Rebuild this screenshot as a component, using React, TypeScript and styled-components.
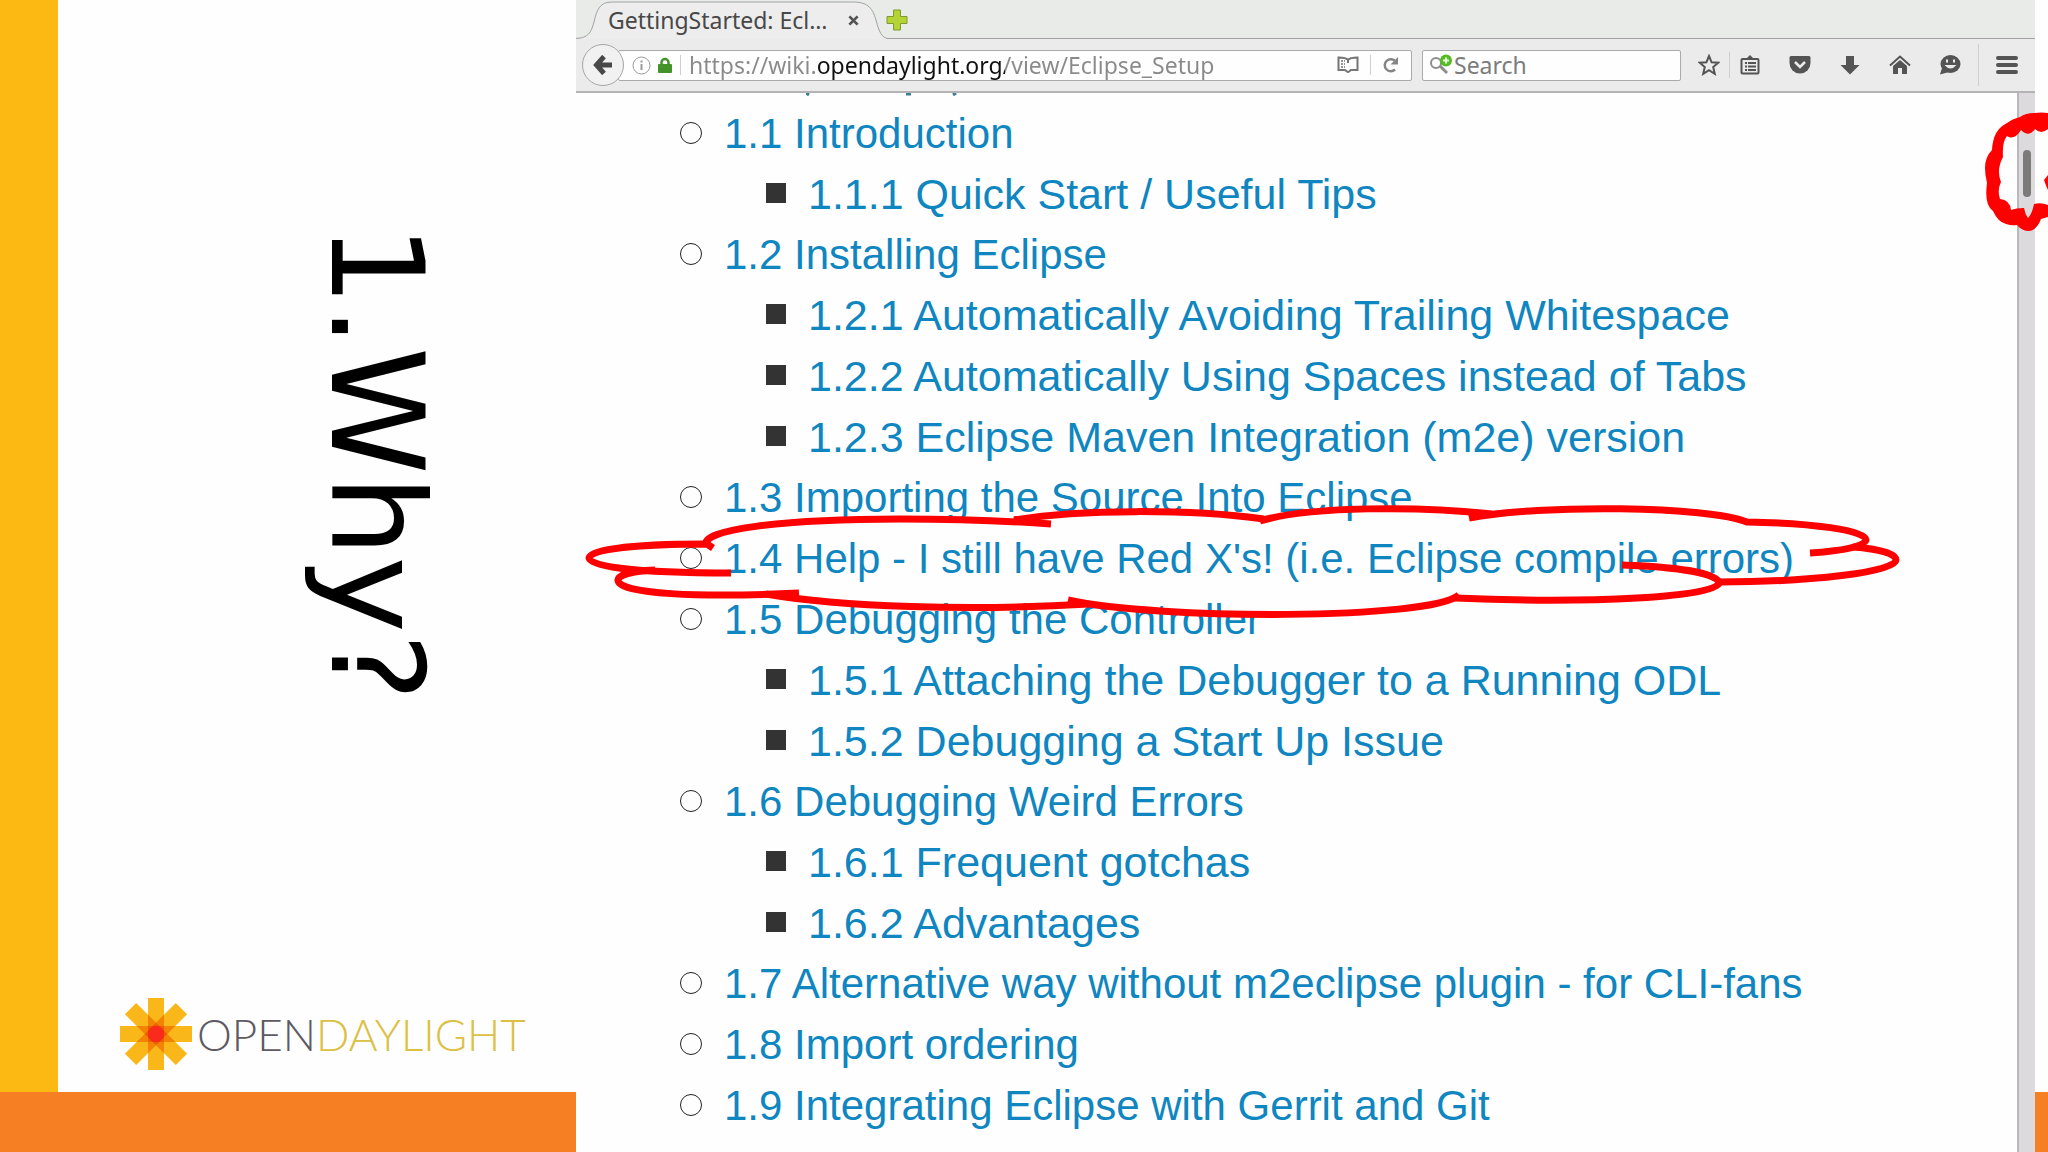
import React from "react";
import styled, { createGlobalStyle, css } from "styled-components";

const GlobalStyle = createGlobalStyle`
  *, *::before, *::after { box-sizing: border-box; }
  body { margin: 0; background: #fefefe; font-family: "Liberation Sans", Arial, sans-serif; }
  button, input { font: inherit; color: inherit; }
`;

const uiFont = css`
  font-family: "Noto Sans", "Open Sans", sans-serif;
  font-size: 23px;
  line-height: 29px;
`;

const Slide = styled.main`
  position: relative;
  display: grid;
  grid-template-columns: 576px minmax(0, 1fr) 13px;
  min-height: 100vh;
  overflow: hidden;
`;

const TitlePanel = styled.section`
  display: flex;
  flex-direction: column;
`;

const TitleBody = styled.div`
  flex: 1;
  display: flex;
  flex-direction: column;
  align-items: flex-start;
  justify-content: space-between;
  padding: 224px 0 21px 61px;
  border-left: 58px solid #fdb913;
`;

const SlideTitle = styled.h1`
  margin: 0 0 0 178px;
  writing-mode: vertical-rl;
  font-family: "DejaVu Sans", sans-serif;
  font-weight: 400;
  font-size: 129px;
  line-height: 160px;
  color: #000;
`;

const Band = styled.div`
  height: 60px;
  background: #f77f23;
`;

const Brand = styled.div`
  display: flex;
  align-items: center;
  gap: 4px;
`;

const BrandName = styled.span`
  font-family: Lato, sans-serif;
  font-weight: 300;
  font-size: 44px;
  line-height: 72px;
  color: #5d5a63;
`;

const BrandAccent = styled.span`
  color: #dcc044;
`;

const LogoMark = styled.svg`
  isolation: isolate;
  rect {
    mix-blend-mode: multiply;
  }
`;

const RightEdge = styled.div`
  display: flex;
  flex-direction: column;
  justify-content: flex-end;
`;

const Browser = styled.section`
  display: flex;
  flex-direction: column;
  min-width: 0;
`;

const TabStrip = styled.div`
  display: flex;
  align-items: center;
  height: 39px;
  background: #e9ebe9;
  border-bottom: 1px solid #a2a2a4;
`;

const Tab = styled.div`
  position: relative;
  display: flex;
  align-items: center;
  width: 312px;
  height: 39px;
  padding: 3px 0 0 32px;
`;

const TabShape = styled.svg`
  position: absolute;
  inset: 0;
`;

const TabLabel = styled.button`
  ${uiFont}
  position: relative;
  width: 231px;
  padding: 0;
  border: 0;
  background: none;
  color: #484848;
  text-align: left;
  white-space: nowrap;
`;

const IconButton = styled.button<{ $w?: number; $h?: number }>`
  position: relative;
  display: flex;
  flex: none;
  align-items: center;
  justify-content: center;
  width: ${(p) => p.$w ?? 40}px;
  height: ${(p) => p.$h ?? 30}px;
  padding: 0;
  border: 0;
  background: none;
  color: #545454;
`;

const NavBar = styled.div`
  display: flex;
  align-items: center;
  height: 54px;
  padding-left: 6px;
  background: #ebebeb;
  border-bottom: 2px solid #b4b4b6;
`;

const BackButton = styled(IconButton)`
  z-index: 1;
  width: 42px;
  height: 42px;
  border: 1px solid #a6a6a8;
  border-radius: 50%;
  background: #f1f1f1;
`;

const Field = styled.div<{ $grow?: boolean }>`
  display: flex;
  align-items: center;
  flex: ${(p) => (p.$grow ? "1" : "0 0 259px")};
  min-width: 0;
  height: 31px;
  margin-left: ${(p) => (p.$grow ? -6 : 10)}px;
  padding-left: ${(p) => (p.$grow ? 11 : 5)}px;
  border: 1px solid #aaaaac;
  border-radius: 2px;
  background: #fefefe;
`;

const Tools = styled.div`
  display: flex;
  align-items: center;
  padding-left: 8px;
`;

const TextInput = styled.input`
  ${uiFont}
  flex: 1;
  min-width: 0;
  height: 29px;
  padding: 0;
  border: 0;
  outline: 0;
  background: none;
  color: #7c7c7c;
  &::placeholder { color: #7c7c7c; opacity: 1; }
`;

const UrlInput = styled(TextInput)`
  background: linear-gradient(90deg, #8a8a8a 129px, #111 129px, #111 316px, #8a8a8a 316px);
  background-clip: text;
  -webkit-text-fill-color: transparent;
`;

const Divider = styled.span<{ $h: number; $before?: number; $after?: number }>`
  flex: none;
  width: 1px;
  height: ${(p) => p.$h}px;
  margin: 0 ${(p) => p.$after ?? 0}px 0 ${(p) => p.$before ?? 0}px;
  background: #cfcfcf;
`;

const Page = styled.div`
  flex: 1;
  display: flex;
  background: #fefefe;
`;

const Content = styled.nav`
  position: relative;
  flex: 1;
  min-width: 0;
  padding: 11px 0 14px 104px;
`;

const ScrolledText = styled.svg`
  position: absolute;
  top: 0;
  left: 230px;
`;

const Scrollbar = styled.div`
  width: 18px;
  padding: 57px 0 0 4px;
  background: #dcdadc;
  border-left: 2px solid #b9b8ba;
`;

const Thumb = styled.div`
  width: 8px;
  height: 47px;
  border-radius: 4px;
  background: #7b7b79;
`;

const List = styled.ul`
  display: grid;
  gap: 1px;
  margin: 0;
  padding: 0;
  list-style: none;
`;

const SubList = styled(List)`
  margin-left: 86px;
`;

const Row = styled.div<{ $nested?: boolean }>`
  display: flex;
  align-items: center;
  gap: 22px;
  color: #0f86c0;
  font-size: ${(p) => (p.$nested ? 43 : 42)}px;
  line-height: 60px;
  white-space: nowrap;
`;

const Bullet = styled.span<{ $square?: boolean }>`
  flex: none;
  width: ${(p) => (p.$square ? 20 : 22)}px;
  height: ${(p) => (p.$square ? 20 : 22)}px;
  margin-bottom: 3px;
  border: ${(p) => (p.$square ? "0" : "1px solid #222")};
  border-radius: ${(p) => (p.$square ? "0" : "50%")};
  background: ${(p) => (p.$square ? "#333" : "none")};
`;

const TocLink = styled.a`
  color: inherit;
  text-decoration: none;
`;

const Annotation = styled.svg`
  position: absolute;
  top: 0;
  left: 0;
  pointer-events: none;
`;

type Entry = { label: string; children?: string[] };

const entries: Entry[] = [
  { label: "1.1 Introduction", children: ["1.1.1 Quick Start / Useful Tips"] },
  {
    label: "1.2 Installing Eclipse",
    children: [
      "1.2.1 Automatically Avoiding Trailing Whitespace",
      "1.2.2 Automatically Using Spaces instead of Tabs",
      "1.2.3 Eclipse Maven Integration (m2e) version",
    ],
  },
  { label: "1.3 Importing the Source Into Eclipse" },
  { label: "1.4 Help - I still have Red X's! (i.e. Eclipse compile errors)" },
  {
    label: "1.5 Debugging the Controller",
    children: ["1.5.1 Attaching the Debugger to a Running ODL", "1.5.2 Debugging a Start Up Issue"],
  },
  { label: "1.6 Debugging Weird Errors", children: ["1.6.1 Frequent gotchas", "1.6.2 Advantages"] },
  { label: "1.7 Alternative way without m2eclipse plugin - for CLI-fans" },
  { label: "1.8 Import ordering" },
  { label: "1.9 Integrating Eclipse with Gerrit and Git" },
];

const TocRow = ({ label, nested }: { label: string; nested?: boolean }) => (
  <Row $nested={nested}>
    <Bullet $square={nested} />
    <TocLink href={"#" + label.split(" ")[0]}>{label}</TocLink>
  </Row>
);

const Logo = () => (
  <LogoMark width="74" height="74" viewBox="-37 -37 74 74" aria-hidden="true">
    {[0, 45, 90, 135].map((a) => (
      <rect key={a} x="-36" y="-8" width="72" height="16" fill="#f9b719" transform={`rotate(${a})`} />
    ))}
    <circle r="8" fill="#fa2a1c" />
  </LogoMark>
);

export default function App() {
  return (
    <>
      <GlobalStyle />
      <Slide>
        <TitlePanel>
          <TitleBody>
            <SlideTitle>1.Why?</SlideTitle>
            <Brand>
              <Logo />
              <BrandName>
                OPEN<BrandAccent>DAYLIGHT</BrandAccent>
              </BrandName>
            </Brand>
          </TitleBody>
          <Band />
        </TitlePanel>

        <Browser>
          <TabStrip>
            <Tab>
              <TabShape width="312" height="39" viewBox="0 0 312 39" aria-hidden="true">
                <path d="M0 38.5C12 38 15 33 18 22C21 9 24 2 36 2H276C290 2 296 6 300 20C303 32 306 38 312 38.5V39H0Z" fill="#ededed" />
                <path d="M0 38.5C12 38 15 33 18 22C21 9 24 2 36 2H276C290 2 296 6 300 20C303 32 306 38 312 38.5" fill="none" stroke="#a2a2a4" />
              </TabShape>
              <TabLabel>GettingStarted: Ecl…</TabLabel>
              <IconButton $w={28} aria-label="Close tab">
                <svg width="11" height="11" viewBox="0 0 12 12" fill="none" stroke="currentColor" strokeWidth="3">
                  <path d="M1.500 1.500L10.500 10.500M10.500 1.500L1.500 10.500" />
                </svg>
              </IconButton>
            </Tab>
            <IconButton $w={18} $h={36} aria-label="New tab">
              <svg width="22" height="22" viewBox="0 0 22 22" overflow="visible">
                <path d="M7.500 2H14.500V8.500H21V15.500H14.500V22H7.500V15.500H1V8.500H7.500Z" fill="#b4d334" stroke="#7f9a2c" />
              </svg>
            </IconButton>
          </TabStrip>

          <NavBar>
            <BackButton aria-label="Back">
              <svg width="20" height="20" viewBox="0 0 20 20" fill="none" stroke="#484848" strokeWidth="5">
                <path d="M11 1.500L3.500 10L11 18.500M4 10H19" />
              </svg>
            </BackButton>
            <Field $grow>
              <IconButton $w={22} aria-label="Site information">
                <svg width="19" height="19" viewBox="0 0 19 19" fill="none" stroke="#9a9a9a">
                  <circle cx="9.500" cy="9.500" r="8.500" />
                  <path d="M9.500 8V14M9.500 4.500V6.500" strokeWidth="2" />
                </svg>
              </IconButton>
              <IconButton $w={26} aria-label="Secure connection">
                <svg width="14" height="17" viewBox="0 0 14 17">
                  <path d="M3.500 8V5.500A3.500 3.500 0 0 1 10.500 5.500V8" fill="none" stroke="#43932a" strokeWidth="2.500" />
                  <rect y="7" width="14" height="9" rx="1" fill="#43932a" />
                </svg>
              </IconButton>
              <Divider $h={20} $before={2} $after={8} />
              <UrlInput aria-label="Address" defaultValue="https://wiki.opendaylight.org/view/Eclipse_Setup" />
              <IconButton $w={44} aria-label="Reader view">
                <svg width="22" height="18" viewBox="0 0 22 18" fill="none" stroke="#757575" strokeWidth="2">
                  <path d="M11 4C9 1.500 6 1.500 1.500 1.500V14H7.500C9 14 10 16 11 16C12 16 13 14 14.500 14H20.500V1.500C16 1.500 13 1.500 11 4V7" />
                  <path d="M4 5H8M4 8H8M4 11H8" strokeWidth="1.500" strokeDasharray="2 1" />
                </svg>
              </IconButton>
              <Divider $h={20} />
              <IconButton aria-label="Reload">
                <svg width="16" height="16" viewBox="0 0 16 16" fill="none" stroke="#858585" strokeWidth="2.500">
                  <path d="M12 12.500A6 6 0 1 1 12.500 4.500" />
                  <path d="M15 0V7.500H7.500Z" fill="#858585" stroke="none" />
                </svg>
              </IconButton>
            </Field>
            <Field>
              <IconButton $w={26} aria-label="Search engine">
                <svg width="24" height="22" viewBox="0 0 24 22" fill="none">
                  <circle cx="7" cy="9" r="5" stroke="#8d8d8d" strokeWidth="2" />
                  <path d="M11 12L18 19" stroke="#8d8d8d" strokeWidth="3" />
                  <circle cx="17" cy="6.500" r="6" fill="#55bb22" />
                  <path d="M17 3.500V9.500M14 6.500H20" stroke="#e9ffd9" strokeWidth="2" />
                </svg>
              </IconButton>
              <TextInput aria-label="Search" placeholder="Search" />
            </Field>

            <Tools>
              <IconButton aria-label="Bookmark">
                <svg width="22" height="22" viewBox="0 0 22 22" fill="none" stroke="currentColor" strokeWidth="2">
                  <path d="M11 2L13.600 8.300L20.200 8.700L15.200 13L16.800 19.800L11 16.200L5.200 19.800L6.800 13L1.800 8.700L8.400 8.300Z" />
                </svg>
              </IconButton>
              <Divider $h={26} />
              <IconButton aria-label="Bookmarks list">
                <svg width="20" height="20" viewBox="0 0 20 20" fill="none" stroke="currentColor" strokeWidth="2">
                  <rect x="1.500" y="4" width="17" height="14.500" rx="1" />
                  <path d="M5 8H7M5 11.500H7M5 15H7M8 8H16M8 11.500H16M8 15H16" />
                  <path d="M6 4L10 0L14 4Z" fill="currentColor" stroke="none" />
                </svg>
              </IconButton>
              <IconButton $w={60} aria-label="Pocket">
                <svg width="22" height="20" viewBox="0 0 22 20">
                  <path d="M2 1H20Q21.500 1 21.500 2.500V8A10.500 10.500 0 0 1 0.500 8V2.500Q0.500 1 2 1Z" fill="currentColor" />
                  <path d="M6 7L11 12L16 7" fill="none" stroke="#ececec" strokeWidth="2.500" />
                </svg>
              </IconButton>
              <IconButton aria-label="Downloads">
                <svg width="20" height="20" viewBox="0 0 20 20">
                  <path d="M6 1H14V10H19.500L10 19.500L0.500 10H6Z" fill="currentColor" />
                </svg>
              </IconButton>
              <IconButton $w={60} aria-label="Home">
                <svg width="22" height="20" viewBox="0 0 22 20">
                  <path d="M1 10.500L11 1.500L21 10.500" fill="none" stroke="currentColor" strokeWidth="2" />
                  <path d="M4 11L11 5L18 11V19H13V13H9V19H4Z" fill="currentColor" />
                </svg>
              </IconButton>
              <IconButton aria-label="Chat">
                <svg width="22" height="20" viewBox="0 0 22 20">
                  <ellipse cx="11.500" cy="9" rx="10" ry="9" fill="currentColor" />
                  <path d="M3 13L1 19.500L10 17Z" fill="currentColor" />
                  <path d="M8 4.500V7.500M15 4.500V7.500" stroke="#ececec" strokeWidth="2" />
                  <path d="M5.500 10H17.500Q11.500 17 5.500 10Z" fill="#ececec" />
                </svg>
              </IconButton>
              <Divider $h={42} $before={8} />
              <IconButton $w={56} aria-label="Menu">
                <svg width="22" height="18" viewBox="0 0 22 18" stroke="currentColor" strokeWidth="4" strokeLinecap="round">
                  <path d="M2 2H20M2 9H20M2 16H20" />
                </svg>
              </IconButton>
            </Tools>
          </NavBar>

          <Page>
            <Content aria-label="Contents">
              <ScrolledText width="154" height="3" viewBox="0 0 154 3" fill="none" stroke="#3f7f98" strokeWidth="3" aria-hidden="true">
                <path d="M0 0L3 2M100 1H105M147 2L150 0" />
              </ScrolledText>
              <List>
                {entries.map((e) => (
                  <li key={e.label}>
                    <TocRow label={e.label} />
                    {e.children && (
                      <SubList>
                        {e.children.map((c) => (
                          <li key={c}>
                            <TocRow label={c} nested />
                          </li>
                        ))}
                      </SubList>
                    )}
                  </li>
                ))}
              </List>
            </Content>
            <Scrollbar>
              <Thumb />
            </Scrollbar>
          </Page>
        </Browser>

        <RightEdge>
          <Band />
        </RightEdge>

        <Annotation width="2048" height="1152" viewBox="0 0 2048 1152" aria-hidden="true">
          <g strokeWidth="7" fill="none" stroke="#fe0000">
            <path d="M706 545C700 530 780 519 900 519C960 519 1010 521 1051 524" />
            <path d="M1014 520C1080 509 1190 509 1264 519" />
            <path d="M1260 521C1310 506 1420 506 1492 514" />
            <path d="M1469 518C1540 504 1710 506 1747 522C1810 523 1867 530 1866 540C1865 547 1840 551 1810 553" />
            <path d="M1853 547C1880 549 1896 554 1896 560C1896 572 1810 582 1719 582" />
            <path d="M1622 565C1680 567 1719 574 1719 583C1717 597 1590 604 1455 598" />
            <path d="M1459 595C1430 620 1160 620 1068 600" />
            <path d="M1089 604C970 611 840 607 766 594" />
            <path d="M799 593C700 598 617 594 618 580C618 575 632 571 655 570" />
            <path d="M731 573C650 573 589 568 589 558C589 549 640 544 707 544L713 548" />
          </g>
          <path
            fill="#fe0000"
            d="M2048 113Q2041 112 2035 113Q2026 113 2020 117Q2012 119 2007 123Q1997 128 1994 138Q1992 145 1992 150Q1985 157 1985 168Q1985 175 1987 183Q1984 205 1993 211Q1998 222 2006 224Q2012 226 2017 225Q2022 231 2029 231Q2037 230 2041 219L2048 217V205Q2041 202 2034 204Q2032 214 2028 218Q2025 214 2024 208Q2016 208 2011 210Q2010 200 2000 199Q1997 190 2001 182Q1996 170 2003 157Q2002 142 2007 136Q2014 141 2021 130Q2029 138 2035 129Q2041 135 2048 129ZM2048 175L2044 180Q2046 186 2048 190Z"
          />
        </Annotation>
      </Slide>
    </>
  );
}
